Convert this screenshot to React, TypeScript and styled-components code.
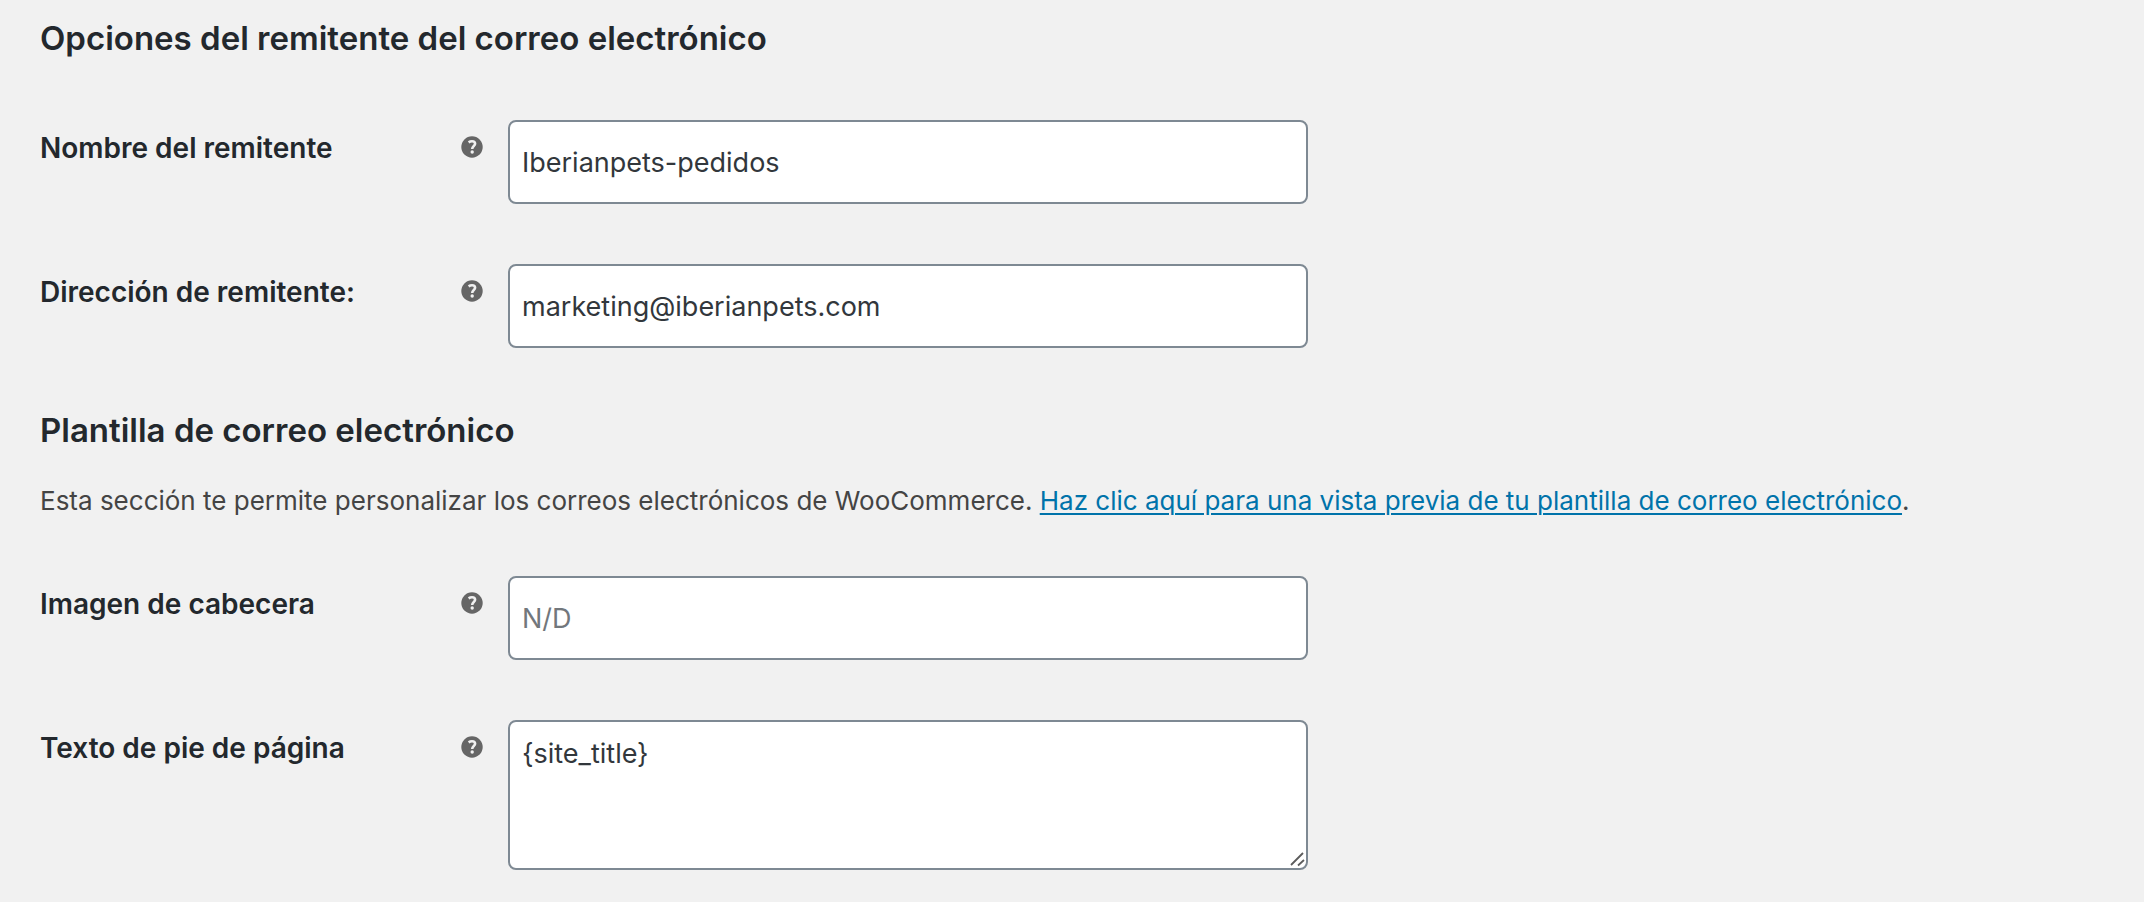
import React, { useId } from 'react';
import styled, { createGlobalStyle, css } from 'styled-components';

const GlobalStyle = createGlobalStyle`
  *, *::before, *::after { box-sizing: border-box; }
  body {
    margin: 0;
    background: #f1f1f1;
    color: #444;
    font-family: Inter, "Liberation Sans", sans-serif;
    font-size: 28px;
    line-height: 40px;
  }
`;

const Settings = styled.form`
  padding: 16px 40px 32px;
`;

const SectionTitle = styled.h2`
  margin: 0;
  color: #23282d;
  font-size: 33px;
  font-weight: 600;
  line-height: 44px;
`;

const Description = styled.p`
  margin: 28px 0 0;
  font-size: 26px;
  line-height: 42px;
`;

const PreviewLink = styled.a`
  color: #0073aa;
  text-decoration: underline;
  text-decoration-thickness: 2px;
  text-underline-offset: 3px;
`;

const Fields = styled.div`
  display: grid;
  gap: 60px;
  padding: 60px 0;

  ${Description} + & { padding-top: 54px; }
  &:last-child { padding-bottom: 0; }
`;

const FieldRow = styled.div`
  display: grid;
  grid-template-columns: 396px 24px minmax(0, 800px);
  column-gap: 24px;
  align-items: start;
`;

const Label = styled.label`
  padding-top: 8px;
  color: #23282d;
  font-weight: 600;
`;

const HelpButton = styled.button`
  display: flex;
  margin: 15px 0 0;
  padding: 0;
  border: 0;
  background: none;
  color: #666;
  cursor: help;
`;

const controlStyle = css`
  display: block;
  width: 100%;
  margin: 0;
  border: 2px solid #7e8993;
  border-radius: 8px;
  background: #fff;
  color: #32373c;
  font: inherit;
  font-size: 27px;

  &::placeholder { color: #72777c; opacity: 1; }
`;

const TextInput = styled.input`
  ${controlStyle}
  height: 84px;
  padding: 0 12px;
`;

const TextAreaFrame = styled.div`
  position: relative;
`;

const TextArea = styled.textarea`
  ${controlStyle}
  height: 150px;
  padding: 12px;
  resize: vertical;

  &::-webkit-resizer { display: none; }
`;

const Grip = styled.svg`
  position: absolute;
  right: 3px;
  bottom: 3px;
  pointer-events: none;
`;

function HelpTip({ text }: { text: string }) {
  return (
    <HelpButton type="button" aria-label={text}>
      <svg width="24" height="24" viewBox="0 0 24 24" aria-hidden="true">
        <circle cx="12" cy="12" r="10.7" fill="currentColor" />
        <path
          d="M8.6 7.4C9.6 6.7 10.8 6.3 12 6.3C13.9 6.3 15.1 7.3 15.1 8.8C15.1 11 12.2 11.1 12.2 14"
          fill="none"
          stroke="#f1f1f1"
          strokeWidth="2.6"
        />
        <circle cx="12.2" cy="17" r="1.7" fill="#f1f1f1" />
      </svg>
    </HelpButton>
  );
}

interface FieldProps {
  label: string;
  help: string;
  value?: string;
  type?: string;
  placeholder?: string;
  multiline?: boolean;
}

function Field({ label, help, value, type = 'text', placeholder, multiline }: FieldProps) {
  const id = useId();
  return (
    <FieldRow>
      <Label htmlFor={id}>{label}</Label>
      <HelpTip text={help} />
      {multiline ? (
        <TextAreaFrame>
          <TextArea id={id} defaultValue={value} spellCheck={false} />
          <Grip width="16" height="16" viewBox="0 0 16 16" aria-hidden="true">
            <path d="M2 14L14 2M9 14.5L15 9" fill="none" stroke="#5c5c5c" strokeWidth="1.8" />
          </Grip>
        </TextAreaFrame>
      ) : (
        <TextInput id={id} type={type} defaultValue={value} placeholder={placeholder} />
      )}
    </FieldRow>
  );
}

export default function App() {
  return (
    <>
      <GlobalStyle />
      <Settings>
        <SectionTitle>Opciones del remitente del correo electrónico</SectionTitle>
        <Fields>
          <Field label="Nombre del remitente" help="Nombre del remitente" value="Iberianpets-pedidos" />
          <Field
            label="Dirección de remitente:"
            help="Dirección de remitente"
            type="email"
            value="marketing@iberianpets.com"
          />
        </Fields>
        <SectionTitle>Plantilla de correo electrónico</SectionTitle>
        <Description>
          Esta sección te permite personalizar los correos electrónicos de WooCommerce.{' '}
          <PreviewLink href="#vista-previa">
            Haz clic aquí para una vista previa de tu plantilla de correo electrónico
          </PreviewLink>
          .
        </Description>
        <Fields>
          <Field label="Imagen de cabecera" help="Imagen de cabecera" placeholder="N/D" />
          <Field label="Texto de pie de página" help="Texto de pie de página" value="{site_title}" multiline />
        </Fields>
      </Settings>
    </>
  );
}
